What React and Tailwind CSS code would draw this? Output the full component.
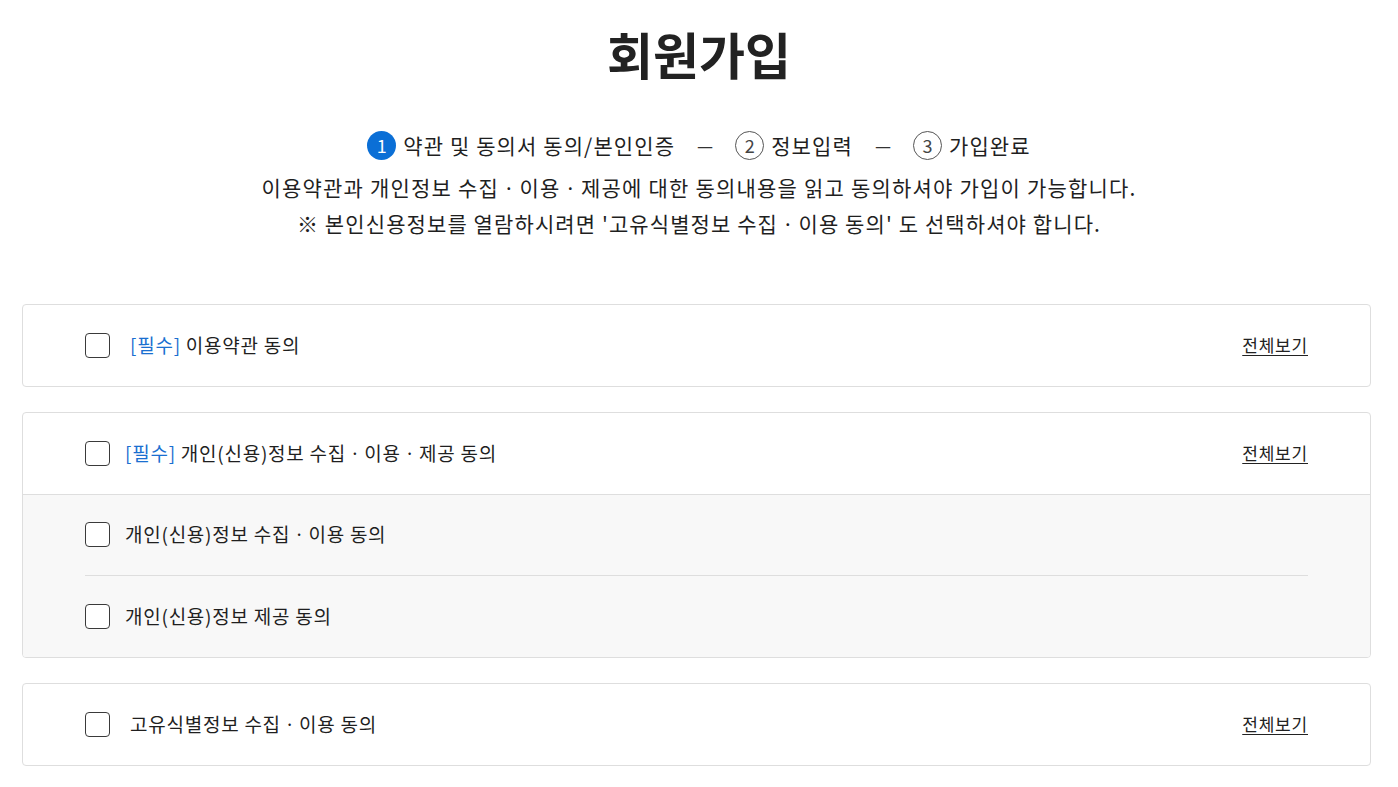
export default function App() {
  const font = { fontFamily: '"Noto Sans CJK KR", "Noto Sans", sans-serif' };
  const Box = () => (
    <span className="inline-block w-[25px] h-[25px] shrink-0 rounded-[4px] border-[1.5px] border-[#3a3a3a] bg-white" />
  );
  const Step = ({ n, active, label }) => (
    <div className="flex items-center gap-[7px]">
      <span
        className={
          active
            ? "flex h-[29px] w-[29px] items-center justify-center rounded-full bg-[#0b6fd6] text-[18px] text-white"
            : "flex h-[29px] w-[29px] items-center justify-center rounded-full border border-[#555] bg-white text-[18px] text-[#444]"
        }
      >
        {n}
      </span>
      <span className="text-[21px] text-[#1f1f1f] tracking-[1.1px]">{label}</span>
    </div>
  );
  const View = () => (
    <a className="text-[17px] text-[#222] tracking-[0.8px] underline underline-offset-[3px] cursor-pointer">전체보기</a>
  );
  return (
    <div className="min-h-screen bg-white" style={font}>
      <div className="flex flex-col items-center pt-[18px]">
        <h1 className="text-[50px] font-bold text-[#222] leading-[70px]">회원가입</h1>
        <div className="mt-[42px] flex items-center gap-[22px]">
          <Step n="1" active label="약관 및 동의서 동의/본인인증" />
          <span className="text-[18px] text-[#333]">—</span>
          <Step n="2" label="정보입력" />
          <span className="text-[18px] text-[#333]">—</span>
          <Step n="3" label="가입완료" />
        </div>
        <p className="mt-[7px] text-[21px] leading-[36px] text-[#1f1f1f] tracking-[1.2px]">
          이용약관과 개인정보 수집ㆍ이용ㆍ제공에 대한 동의내용을 읽고 동의하셔야 가입이 가능합니다.
        </p>
        <p className="text-[21px] leading-[36px] text-[#1f1f1f] tracking-[1.1px]">
          ※ 본인신용정보를 열람하시려면 '고유식별정보 수집ㆍ이용 동의' 도 선택하셔야 합니다.
        </p>
      </div>

      <div className="ml-[22px] mr-[27px] mt-[63px] flex flex-col gap-[25px] pb-[20px]">
        <div className="rounded-[4px] border border-[#dedede] bg-white">
          <div className="flex h-[81px] items-center justify-between px-[62px]">
            <div className="flex items-center gap-[20px]">
              <Box />
              <span className="text-[19px] text-[#1f1f1f] tracking-[0.75px]">
                <span className="text-[#1a6fd0]">[필수]</span> 이용약관 동의
              </span>
            </div>
            <View />
          </div>
        </div>

        <div className="overflow-hidden rounded-[4px] border border-[#dedede] bg-white">
          <div className="flex h-[82px] items-center justify-between border-b border-[#dedede] px-[62px]">
            <div className="flex items-center gap-[15px]">
              <Box />
              <span className="text-[19px] text-[#1f1f1f] tracking-[0.75px]">
                <span className="text-[#1a6fd0]">[필수]</span> 개인(신용)정보 수집ㆍ이용ㆍ제공 동의
              </span>
            </div>
            <View />
          </div>
          <div className="bg-[#f8f8f8] px-[62px]">
            <div className="flex h-[81px] items-center gap-[15px] border-b border-[#dedede]">
              <Box />
              <span className="text-[19px] text-[#1f1f1f] tracking-[0.75px]">개인(신용)정보 수집ㆍ이용 동의</span>
            </div>
            <div className="flex h-[81px] items-center gap-[15px]">
              <Box />
              <span className="text-[19px] text-[#1f1f1f] tracking-[0.75px]">개인(신용)정보 제공 동의</span>
            </div>
          </div>
        </div>

        <div className="rounded-[4px] border border-[#dedede] bg-white">
          <div className="flex h-[81px] items-center justify-between px-[62px]">
            <div className="flex items-center gap-[20px]">
              <Box />
              <span className="text-[19px] text-[#1f1f1f] tracking-[0.75px]">고유식별정보 수집ㆍ이용 동의</span>
            </div>
            <View />
          </div>
        </div>
      </div>
    </div>
  );
}
